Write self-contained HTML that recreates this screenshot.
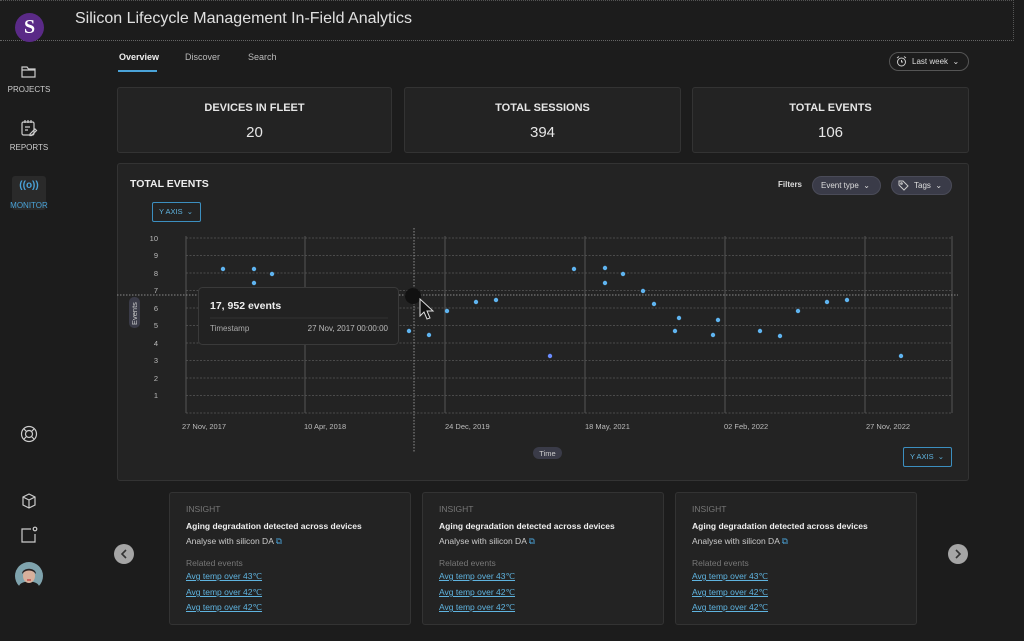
<!DOCTYPE html>
<html><head><meta charset="utf-8"><style>
*{margin:0;padding:0;box-sizing:border-box}
body{width:1024px;height:641px;background:#1c1c1c;font-family:"Liberation Sans",sans-serif;color:#ddd;position:relative;overflow:hidden}
.a{position:absolute}
.card{position:absolute;background:#232323;border:1px solid #333;border-radius:3px}
.lbl{font-size:8px;color:#ccc;text-align:center;width:58px;left:0}
.stat .t{position:absolute;top:14px;width:100%;text-align:center;font-size:11px;font-weight:bold;color:#e6e6e6}
.stat .v{position:absolute;top:36px;width:100%;text-align:center;font-size:15px;color:#e6e6e6}
.ins{font-size:8.5px}
.ins div{position:absolute;left:16px;white-space:nowrap}
.ins a{color:#5fb4e0;text-decoration:underline}
.pill{position:absolute;border:1px solid #555;border-radius:10px;font-size:8px;color:#ddd}
</style></head><body>
<div class="a" style="left:0;top:40px;width:1014px;border-top:1px dotted #666"></div>
<div class="a" style="left:1013px;top:0;height:41px;border-left:1px dotted #555"></div>
<div class="a" style="left:0;top:0;width:1014px;border-top:1px dotted #555"></div>
<div class="a" style="left:15px;top:13px;width:29px;height:29px;border-radius:50%;background:#5a2a87;color:#fff;font:bold 20px 'Liberation Serif',serif;text-align:center;line-height:29px">S</div>
<div class="a" style="left:75px;top:10px;font-size:16px;color:#e0e0e0">Silicon Lifecycle Management In-Field Analytics</div>
<svg class="a" style="left:21px;top:65px" width="16" height="14" viewBox="0 0 16 14" fill="none" stroke="#ccc" stroke-width="1.2"><path d="M1 2h5l1.5 2H14v8H1z M1 5h13"/></svg>
<div class="a lbl" style="top:85px">PROJECTS</div>
<svg class="a" style="left:20px;top:119px" width="18" height="18" viewBox="0 0 18 18" fill="none" stroke="#ccc" stroke-width="1.2"><rect x="2" y="3" width="12" height="13" rx="1.5"/><path d="M5 1v3M8 1v3M11 1v3M5 8h5M5 11h3M10 15l5-5 1.5 1.5-5 5H10z"/></svg>
<div class="a lbl" style="top:143px">REPORTS</div>
<div class="a" style="left:12px;top:176px;width:34px;height:34px;background:#2a2a2a;border-radius:3px"></div>
<div class="a" style="left:12px;top:180px;width:34px;text-align:center;font-size:10px;color:#4aa3d8;font-weight:bold">((o))</div>
<div class="a lbl" style="top:201px;color:#4aa3d8">MONITOR</div>
<svg class="a" style="left:20px;top:425px" width="18" height="18" viewBox="0 0 18 18" fill="none" stroke="#ccc" stroke-width="1.2"><circle cx="9" cy="9" r="7.5"/><circle cx="9" cy="9" r="3.5"/><path d="M4 4l2.5 2.5M14 4l-2.5 2.5M4 14l2.5-2.5M14 14l-2.5-2.5"/></svg>
<svg class="a" style="left:21px;top:493px" width="16" height="16" viewBox="0 0 16 16" fill="none" stroke="#ccc" stroke-width="1.2"><path d="M8 1l6 3v8l-6 3-6-3V4z M2 4l6 3 6-3 M8 7v8"/></svg>
<svg class="a" style="left:20px;top:526px" width="18" height="18" viewBox="0 0 18 18" fill="none" stroke="#ccc" stroke-width="1.2"><path d="M11 3H2v13h13V8"/><circle cx="15" cy="3" r="1.8"/></svg>
<svg class="a" style="left:15px;top:562px" width="28" height="28" viewBox="0 0 28 28"><circle cx="14" cy="14" r="14" fill="#7fa3ad"/><path d="M4 24c2-6 18-6 20 0l-4 4H8z" fill="#1d1a1a"/><ellipse cx="14" cy="14" rx="6" ry="7" fill="#d8b09c"/><path d="M7 12c0-7 14-7 14 0l-2-2c-3-2-7-2-10 0z" fill="#2a2222"/><path d="M12 18h4" stroke="#b33" stroke-width="1.2"/></svg>
<div class="a" style="left:119px;top:52px;font-size:9px;font-weight:bold;color:#eee">Overview</div>
<div class="a" style="left:185px;top:52px;font-size:9px;color:#bbb">Discover</div>
<div class="a" style="left:248px;top:52px;font-size:9px;color:#bbb">Search</div>
<div class="a" style="left:118px;top:70px;width:39px;height:2px;background:#4aa3d8"></div>
<div class="pill" style="left:889px;top:52px;width:80px;height:19px;border-radius:10px;line-height:17px;padding-left:22px">Last week &nbsp;⌄</div>
<svg class="a" style="left:896px;top:56px" width="11" height="11" viewBox="0 0 11 11" fill="none" stroke="#ccc"><circle cx="5.5" cy="6" r="4"/><path d="M5.5 4v2h1.5M1 2l2-1.5M10 2L8 .5"/></svg>
<div class="card stat" style="left:117px;top:87px;width:275px;height:66px"><div class="t">DEVICES IN FLEET</div><div class="v">20</div></div>
<div class="card stat" style="left:404px;top:87px;width:277px;height:66px"><div class="t">TOTAL SESSIONS</div><div class="v">394</div></div>
<div class="card stat" style="left:692px;top:87px;width:277px;height:66px"><div class="t">TOTAL EVENTS</div><div class="v">106</div></div>
<div class="card" style="left:117px;top:163px;width:852px;height:318px"></div>
<div class="a" style="left:130px;top:178px;font-size:10.5px;font-weight:bold;color:#eee">TOTAL EVENTS</div>
<div class="a" style="left:778px;top:180px;font-size:8px;font-weight:bold;color:#ddd">Filters</div>
<div class="pill" style="left:812px;top:176px;width:69px;height:19px;background:#3a3b48;border-color:#4a4b58;line-height:17px;padding-left:8px">Event type &nbsp;⌄</div>
<div class="pill" style="left:891px;top:176px;width:61px;height:19px;background:#3a3b48;border-color:#4a4b58;line-height:17px;padding-left:22px">Tags &nbsp;⌄</div>
<svg class="a" style="left:898px;top:180px" width="11" height="11" viewBox="0 0 11 11" fill="none" stroke="#ccc"><path d="M1 1h4l5 5-4 4-5-5z"/><circle cx="3.5" cy="3.5" r=".8"/></svg>
<div class="a" style="left:152px;top:202px;width:49px;height:20px;border:1px solid #3c8fc0;border-radius:2px;font-size:7.5px;color:#5fb4e0;line-height:18px;padding-left:6px">Y AXIS &nbsp;⌄</div>
<div class="a" style="left:903px;top:447px;width:49px;height:20px;border:1px solid #3c8fc0;border-radius:2px;font-size:7.5px;color:#5fb4e0;line-height:18px;padding-left:6px">Y AXIS &nbsp;⌄</div>
<svg class="a" style="left:0;top:0" width="1024" height="641" font-family="Liberation Sans, sans-serif">
<g stroke="#5a5a5a" stroke-width="0.8" stroke-dasharray="2,1.5">
<line x1="186" y1="238" x2="952" y2="238"/><line x1="186" y1="255.5" x2="952" y2="255.5"/><line x1="186" y1="273" x2="952" y2="273"/><line x1="186" y1="290.5" x2="952" y2="290.5"/><line x1="186" y1="308" x2="952" y2="308"/><line x1="186" y1="325.5" x2="952" y2="325.5"/><line x1="186" y1="343" x2="952" y2="343"/><line x1="186" y1="360.5" x2="952" y2="360.5"/><line x1="186" y1="378" x2="952" y2="378"/><line x1="186" y1="395.5" x2="952" y2="395.5"/><line x1="186" y1="413" x2="952" y2="413"/>
</g>
<g stroke="#555" stroke-width="1"><line x1="186" y1="236" x2="186" y2="413"/><line x1="305" y1="236" x2="305" y2="413"/><line x1="445" y1="236" x2="445" y2="413"/><line x1="585" y1="236" x2="585" y2="413"/><line x1="725" y1="236" x2="725" y2="413"/><line x1="865" y1="236" x2="865" y2="413"/><line x1="952" y1="236" x2="952" y2="413"/></g>
<g stroke="#aaa" stroke-width="0.8" stroke-dasharray="1.5,1.5"><line x1="117" y1="295" x2="958" y2="295"/><line x1="414" y1="228" x2="414" y2="453"/></g>
<g fill="#bbb" font-size="7.5" text-anchor="end"><text x="158" y="241">10</text><text x="158" y="258">9</text><text x="158" y="276">8</text><text x="158" y="293">7</text><text x="158" y="311">6</text><text x="158" y="328">5</text><text x="158" y="346">4</text><text x="158" y="363">3</text><text x="158" y="381">2</text><text x="158" y="398">1</text></g>
<g fill="#bbb" font-size="7.5"><text x="182" y="429">27 Nov, 2017</text><text x="304" y="429">10 Apr, 2018</text><text x="445" y="429">24 Dec, 2019</text><text x="585" y="429">18 May, 2021</text><text x="724" y="429">02 Feb, 2022</text><text x="866" y="429">27 Nov, 2022</text></g>
<g fill="#5fb4f0">
<circle cx="223" cy="269" r="2.2"/><circle cx="254" cy="269" r="2.2"/><circle cx="254" cy="283" r="2.2"/><circle cx="272" cy="274" r="2.2"/><circle cx="409" cy="331" r="2.2"/><circle cx="429" cy="335" r="2.2"/><circle cx="447" cy="311" r="2.2"/><circle cx="476" cy="302" r="2.2"/><circle cx="496" cy="300" r="2.2"/><circle cx="550" cy="356" r="2.2" fill="#6a8cff"/><circle cx="574" cy="269" r="2.2"/><circle cx="605" cy="268" r="2.2"/><circle cx="605" cy="283" r="2.2"/><circle cx="623" cy="274" r="2.2"/><circle cx="643" cy="291" r="2.2"/><circle cx="654" cy="304" r="2.2"/><circle cx="679" cy="318" r="2.2"/><circle cx="675" cy="331" r="2.2"/><circle cx="713" cy="335" r="2.2"/><circle cx="718" cy="320" r="2.2"/><circle cx="760" cy="331" r="2.2"/><circle cx="780" cy="336" r="2.2"/><circle cx="798" cy="311" r="2.2"/><circle cx="827" cy="302" r="2.2"/><circle cx="847" cy="300" r="2.2"/><circle cx="901" cy="356" r="2.2"/>
</g>
<rect x="129" y="297" width="11" height="31" rx="5" fill="#3a3b48"/>
<text transform="translate(137,325) rotate(-90)" fill="#ccc" font-size="7.5">Events</text>
<rect x="198.5" y="287.5" width="200" height="57" rx="4" fill="#222" stroke="#3a3a3a"/>
<text x="210" y="309" fill="#eee" font-size="10.5" font-weight="bold">17, 952 events</text>
<line x1="210" y1="318" x2="388" y2="318" stroke="#333"/>
<text x="210" y="331" fill="#aaa" font-size="8">Timestamp</text>
<text x="388" y="331" fill="#bbb" font-size="8" text-anchor="end">27 Nov, 2017 00:00:00</text>
<circle cx="413" cy="296" r="8" fill="#111"/>
<path d="M420 299l0 17 4-4 3 7 3-1-3-7 6 0z" fill="#111" stroke="#ddd" stroke-width="1"/>
<rect x="533" y="447" width="29" height="12" rx="6" fill="#3a3b48"/>
<text x="547.5" y="456" fill="#ccc" font-size="7.5" text-anchor="middle">Time</text>
<circle cx="124" cy="554" r="10" fill="#a5a5a5"/><path d="M126 550l-4 4 4 4" stroke="#333" stroke-width="1.6" fill="none"/>
<circle cx="958" cy="554" r="10" fill="#a5a5a5"/><path d="M956 550l4 4-4 4" stroke="#333" stroke-width="1.6" fill="none"/>
</svg>
<div class="card ins" style="left:169px;top:492px;width:242px;height:133px"><div style="top:11px;color:#777">INSIGHT</div><div style="top:28px;font-weight:bold;color:#eee">Aging degradation detected across devices</div><div style="top:43px;color:#ccc">Analyse with silicon DA <span style="color:#4aa3d8">⧉</span></div><div style="top:65px;color:#777">Related events</div><div style="top:78px"><a>Avg temp over 43℃</a></div><div style="top:94px"><a>Avg temp over 42℃</a></div><div style="top:109px"><a>Avg temp over 42℃</a></div></div>
<div class="card ins" style="left:422px;top:492px;width:242px;height:133px"><div style="top:11px;color:#777">INSIGHT</div><div style="top:28px;font-weight:bold;color:#eee">Aging degradation detected across devices</div><div style="top:43px;color:#ccc">Analyse with silicon DA <span style="color:#4aa3d8">⧉</span></div><div style="top:65px;color:#777">Related events</div><div style="top:78px"><a>Avg temp over 43℃</a></div><div style="top:94px"><a>Avg temp over 42℃</a></div><div style="top:109px"><a>Avg temp over 42℃</a></div></div>
<div class="card ins" style="left:675px;top:492px;width:242px;height:133px"><div style="top:11px;color:#777">INSIGHT</div><div style="top:28px;font-weight:bold;color:#eee">Aging degradation detected across devices</div><div style="top:43px;color:#ccc">Analyse with silicon DA <span style="color:#4aa3d8">⧉</span></div><div style="top:65px;color:#777">Related events</div><div style="top:78px"><a>Avg temp over 43℃</a></div><div style="top:94px"><a>Avg temp over 42℃</a></div><div style="top:109px"><a>Avg temp over 42℃</a></div></div>
</body></html>
